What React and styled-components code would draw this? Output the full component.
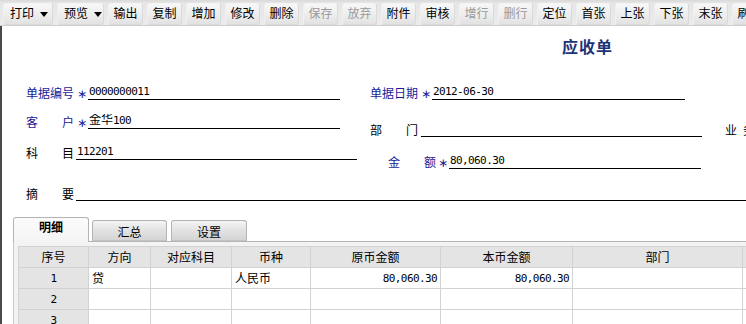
import React from "react";
import styled, { createGlobalStyle } from "styled-components";

const Global = createGlobalStyle`
  html, body { margin: 0; padding: 0; background: #fff; }
  body { width: 746px; height: 324px; overflow: hidden;
    font-family: "Liberation Sans", "Noto Sans CJK SC", sans-serif; font-size: 12px; color: #000; }
`;

const Page = styled.div`
  width: 746px; height: 324px; overflow: hidden; display: flex; flex-direction: column;
`;

const Toolbar = styled.div`
  height: 26px; flex: none; display: flex; align-items: flex-start; gap: 4px;
  padding: 3px 0 0 3px; box-sizing: border-box;
  background: linear-gradient(#d9d9d9 0px, #e6e6e6 3px, #ebebeb 100%);
  border-bottom: 1px solid #cfcfcf; white-space: nowrap;
`;

const Btn = styled.div`
  flex: none; width: ${p => p.$w || 35}px; height: 22px; box-sizing: border-box;
  display: flex; align-items: center; justify-content: ${p => p.$caret ? "flex-start" : "center"};
  padding-left: ${p => p.$caret ? 6 : 0}px; gap: 6px;
  background: linear-gradient(#f7f7f7, #ececec 60%, #e2e2e2);
  border: 1px solid #dadada; border-top-color: #f4f4f4; border-left-color: #f0f0f0;
  border-radius: 3px; font-size: 12px; line-height: 14px;
  color: ${p => p.$disabled ? "#9a9a9a" : "#000"};
`;

const Caret = () => (
  <svg width="8" height="5" viewBox="0 0 8 5"><path d="M0 0h8L4 5z" fill="#000" /></svg>
);

const Main = styled.div`
  flex: 1; border-left: 2px solid #4a4a4a; display: flex; flex-direction: column;
  overflow: hidden;
`;

const Title = styled.div`
  margin-top: 10px; padding-left: 560px; height: 20px; line-height: 20px;
  font-size: 16px; font-weight: bold; color: #1b3478; letter-spacing: 1px;
  font-family: "Noto Sans CJK SC", sans-serif;
`;

const Form = styled.div`
  margin-top: 29px; display: flex; flex-direction: column; padding-left: 24px;
`;

const Row = styled.div`
  height: ${p => p.$h}px; display: flex; align-items: flex-start; gap: ${p => p.$gap || 30}px;
  white-space: nowrap;
`;

const Field = styled.div`
  display: flex; align-items: flex-end; height: 15px; margin-top: ${p => p.$mt || 0}px;
  flex: ${p => p.$grow ? 1 : "none"};
`;

const Label = styled.span`
  width: 48px; flex: none; line-height: 14px; white-space: pre;
  color: ${p => p.$blue ? "#1a1a96" : "#000"};
  font-family: "Noto Sans CJK SC", sans-serif;
  margin-right: ${p => p.$gap ?? 2}px;
  letter-spacing: ${p => p.$ls || 0}px;
`;

const Star = styled.span`
  width: 12px; flex: none; text-align: center; color: #1a1a96; line-height: 12px;
  font-size: 12px; font-family: "DejaVu Sans", sans-serif;
`;

const Line = styled.div`
  width: ${p => p.$w ? p.$w + "px" : "auto"}; flex: ${p => p.$w ? "none" : 1};
  height: 15px; box-sizing: border-box; border-bottom: 1px solid #000;
  line-height: 13px; font-size: 12px; padding-left: 1px; overflow: hidden;
`;

const Mono = styled.span`
  font-family: "DejaVu Sans Mono", monospace; font-size: 11px; letter-spacing: -0.6px;
`;

const TabBar = styled.div`
  margin-top: 16px; height: 24px; display: flex; align-items: flex-end; padding-left: 11px; gap: 3px;
`;

const Tab = styled.div`
  position: relative; z-index: ${p => p.$active ? 2 : 0};
  width: ${p => p.$w}px; box-sizing: border-box; flex: none;
  height: ${p => p.$active ? 25 : 21}px; margin-bottom: ${p => p.$active ? -1 : 0}px;
  margin-left: ${p => p.$ml || 0}px;
  border: 1px solid #b4b4b4; border-bottom: ${p => p.$active ? "none" : "1px solid #c4c4c4"};
  border-radius: 3px 3px 0 0;
  background: ${p => p.$active ? "linear-gradient(#fbfbfb, #f4f4f4)" : "linear-gradient(#f4f4f4, #e2e2e2 50%, #d4d4d4)"};
  text-align: center; font-family: "Noto Sans CJK SC", sans-serif;
  font-weight: ${p => p.$active ? "bold" : "normal"};
  padding-top: ${p => p.$active ? 2 : 4}px; line-height: 14px;
`;

const Panel = styled.div`
  margin-left: 11px; flex: 1; border-top: 1px solid #b4b4b4; border-left: 1px solid #c8c8c8;
  background: #f3f3f3; padding: 4px 0 0 4px; overflow: hidden;
`;

const Table = styled.table`
  border-collapse: collapse; table-layout: fixed; width: 750px; background: #fff;
`;

const Th = styled.th`
  height: 20px; padding: 0; font-weight: normal; background: #e4e4e4;
  border: 1px solid #d2d2d2; text-align: center; line-height: 18px;
  font-family: "Noto Sans CJK SC", sans-serif; font-size: 12px;
`;

const Td = styled.td`
  height: 20px; padding: 0 3px; border: 1px solid #d2d2d2; line-height: 18px;
  text-align: ${p => p.$align || "left"}; background: ${p => p.$head ? "#e4e4e4" : "#fff"};
  font-family: "Noto Sans CJK SC", sans-serif; font-size: 12px; box-sizing: border-box;
`;

const buttons = [
  { t: "打印", w: 50, caret: true },
  { t: "预览", w: 47, caret: true },
  { t: "输出" }, { t: "复制" }, { t: "增加" }, { t: "修改" }, { t: "删除" },
  { t: "保存", d: true }, { t: "放弃", d: true }, { t: "附件" }, { t: "审核" },
  { t: "增行", d: true }, { t: "删行", d: true }, { t: "定位" }, { t: "首张" },
  { t: "上张" }, { t: "下张" }, { t: "末张" }, { t: "刷新" },
];

const cols = [
  { t: "序号", w: 70 }, { t: "方向", w: 62 }, { t: "对应科目", w: 81 }, { t: "币种", w: 79 },
  { t: "原币金额", w: 130 }, { t: "本币金额", w: 132 }, { t: "部门", w: 170 }, { t: "", w: 26 },
];

const rows = [
  ["贷", "", "人民币", "80,060.30", "80,060.30", "", ""],
  ["", "", "", "", "", "", ""],
  ["", "", "", "", "", "", ""],
];

export default function App() {
  return (
    <Page>
      <Global />
      <Toolbar>
        {buttons.map(b => (
          <Btn key={b.t} $w={b.w} $caret={b.caret} $disabled={b.d}>
            {b.t}{b.caret && <Caret />}
          </Btn>
        ))}
      </Toolbar>
      <Main>
        <Title>应收单</Title>
        <Form>
          <Row $h={29}>
            <Field><Label $blue>单据编号</Label><Star>∗</Star><Line $w={252}><Mono>0000000011</Mono></Line></Field>
            <Field><Label $blue>单据日期</Label><Star>∗</Star><Line $w={253}><Mono>2012-06-30</Mono></Line></Field>
          </Row>
          <Row $h={31} $gap={23}>
            <Field style={{ marginRight: 7 }}><Label $blue>{"客　　户"}</Label><Star>∗</Star><Line $w={252}>金华<Mono>100</Mono></Line></Field>
            <Field $mt={8}><Label $gap={3}>{"部　　门"}</Label><Line $w={281} /></Field>
            <Field $mt={8}><Label $ls={6}>业务员</Label><Line $w={100} /></Field>
          </Row>
          <Row $h={41} $gap={31}>
            <Field><Label>{"科　　目"}</Label><Line $w={281}><Mono>112201</Mono></Line></Field>
            <Field $mt={9}><Label $blue $gap={1}>{"金　　额"}</Label><Star>∗</Star><Line $w={252}><Mono>80,060.30</Mono></Line></Field>
          </Row>
          <Row $h={15}>
            <Field $grow><Label>{"摘　　要"}</Label><Line /></Field>
          </Row>
        </Form>
        <TabBar>
          <Tab $active $w={76}>明细</Tab>
          <Tab $w={75}>汇总</Tab>
          <Tab $w={76} $ml={1}>设置</Tab>
        </TabBar>
        <Panel>
          <Table>
            <colgroup>{cols.map((c, i) => <col key={i} style={{ width: c.w }} />)}</colgroup>
            <thead>
              <tr>{cols.map((c, i) => <Th key={i}>{c.t}</Th>)}</tr>
            </thead>
            <tbody>
              {rows.map((r, i) => (
                <tr key={i}>
                  <Td $head $align="center"><Mono>{i + 1}</Mono></Td>
                  {r.map((v, j) => (
                    <Td key={j} $align={j === 3 || j === 4 ? "right" : "left"}>
                      {j === 3 || j === 4 ? <Mono>{v}</Mono> : v}
                    </Td>
                  ))}
                </tr>
              ))}
            </tbody>
          </Table>
        </Panel>
      </Main>
    </Page>
  );
}
